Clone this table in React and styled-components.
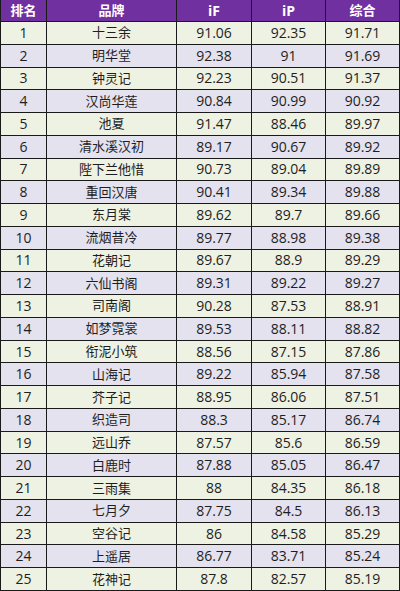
import styled, { createGlobalStyle } from "styled-components";

const GlobalStyle = createGlobalStyle`
  html, body {
    margin: 0;
    padding: 0;
    background: #ffffff;
  }
  body {
    font-family: "Noto Sans CJK SC", "Noto Sans", "Liberation Sans", sans-serif;
  }
`;

const rows = [
  [1, "十三余", "91.06", "92.35", "91.71"],
  [2, "明华堂", "92.38", "91", "91.69"],
  [3, "钟灵记", "92.23", "90.51", "91.37"],
  [4, "汉尚华莲", "90.84", "90.99", "90.92"],
  [5, "池夏", "91.47", "88.46", "89.97"],
  [6, "清水溪汉初", "89.17", "90.67", "89.92"],
  [7, "陛下兰他惜", "90.73", "89.04", "89.89"],
  [8, "重回汉唐", "90.41", "89.34", "89.88"],
  [9, "东月棠", "89.62", "89.7", "89.66"],
  [10, "流烟昔冷", "89.77", "88.98", "89.38"],
  [11, "花朝记", "89.67", "88.9", "89.29"],
  [12, "六仙书阁", "89.31", "89.22", "89.27"],
  [13, "司南阁", "90.28", "87.53", "88.91"],
  [14, "如梦霓裳", "89.53", "88.11", "88.82"],
  [15, "衔泥小筑", "88.56", "87.15", "87.86"],
  [16, "山海记", "89.22", "85.94", "87.58"],
  [17, "芥子记", "88.95", "86.06", "87.51"],
  [18, "织造司", "88.3", "85.17", "86.74"],
  [19, "远山乔", "87.57", "85.6", "86.59"],
  [20, "白鹿时", "87.88", "85.05", "86.47"],
  [21, "三雨集", "88", "84.35", "86.18"],
  [22, "七月夕", "87.75", "84.5", "86.13"],
  [23, "空谷记", "86", "84.58", "85.29"],
  [24, "上遥居", "86.77", "83.71", "85.24"],
  [25, "花神记", "87.8", "82.57", "85.19"],
];

const Table = styled.div`
  width: 400px;
  height: 591px;
  box-sizing: border-box;
  display: grid;
  grid-template-columns: 45px 129px 74px 73px 1fr;
  grid-template-rows: 21px repeat(25, 1fr);
  gap: 1px;
  background: #1a1a1a;
  border: 1px solid #1a1a1a;
  border-top: none;
`;

const HeadCell = styled.div`
  background: #7030a0;
  color: #ffffff;
  font-family: "Open Sans", "Noto Sans CJK SC", sans-serif;
  font-size: ${(p) => (p.$latin ? "14px" : "13px")};
  font-weight: 700;
  display: flex;
  align-items: center;
  justify-content: center;
  line-height: 1;
`;

const Cell = styled.div`
  background: ${(p) => (p.$even ? "#e4e2ee" : "#eef2e3")};
  color: #1e1e1e;
  font-family: "Open Sans", "Noto Sans CJK SC", sans-serif;
  font-size: ${(p) => (p.$text ? "13px" : "14px")};
  display: flex;
  align-items: center;
  justify-content: center;
  line-height: 1;
`;

const headers = ["排名", "品牌", "iF", "iP", "综合"];

export default function App() {
  return (
    <>
      <GlobalStyle />
      <Table>
        {headers.map((h, i) => (
          <HeadCell key={h} $latin={i === 2 || i === 3}>
            {h}
          </HeadCell>
        ))}
        {rows.map((r) =>
          r.map((v, i) => (
            <Cell key={r[0] + "-" + i} $even={r[0] % 2 === 0} $text={i === 1}>
              {v}
            </Cell>
          ))
        )}
      </Table>
    </>
  );
}
